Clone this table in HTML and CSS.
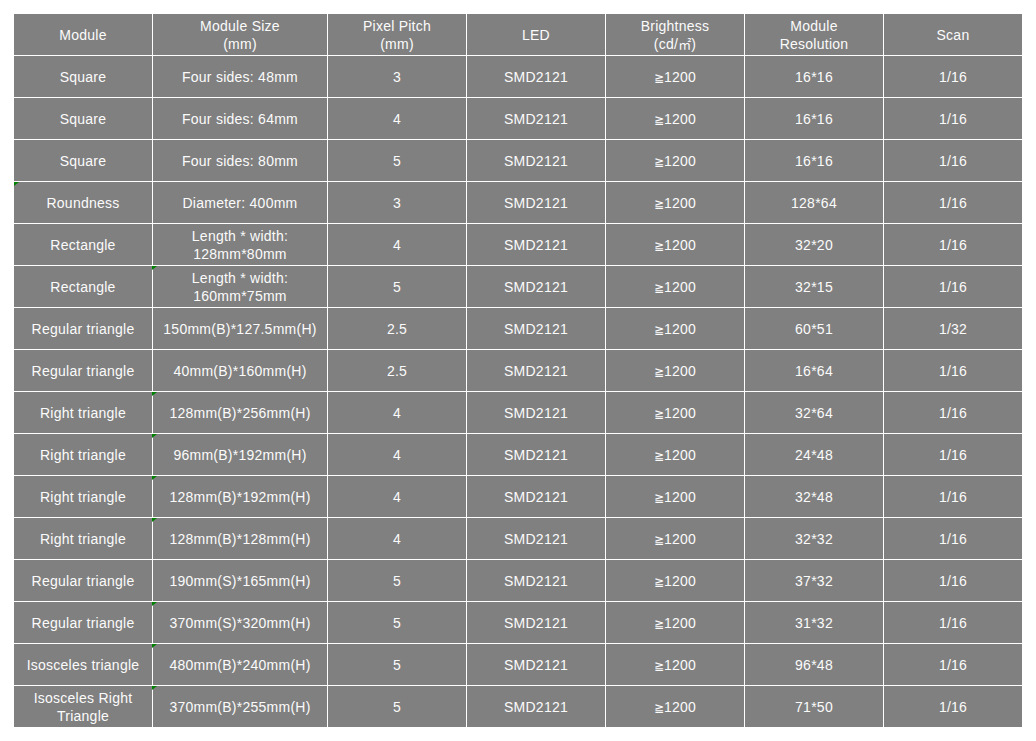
FILE: index.html
```html
<!DOCTYPE html>
<html>
<head>
<meta charset="utf-8">
<title>Module specifications</title>
<link rel="stylesheet" href="styles.css">
</head>
<body>
<table class="spec">
  <colgroup>
    <col class="c-narrow"><col class="c-wide"><col class="c-narrow"><col class="c-narrow"><col class="c-narrow"><col class="c-narrow"><col class="c-narrow">
  </colgroup>
  <thead>
    <tr><th>Module</th><th>Module Size<br>(mm)</th><th>Pixel Pitch<br>(mm)</th><th>LED</th><th>Brightness<br>(cd/<span class="sq">㎡</span>)</th><th>Module<br>Resolution</th><th>Scan</th></tr>
  </thead>
  <tbody>
    <tr><td>Square</td><td>Four sides: 48mm</td><td>3</td><td>SMD2121</td><td><span class="ge">≧</span>1200</td><td>16*16</td><td>1/16</td></tr>
    <tr><td>Square</td><td>Four sides: 64mm</td><td>4</td><td>SMD2121</td><td><span class="ge">≧</span>1200</td><td>16*16</td><td>1/16</td></tr>
    <tr><td>Square</td><td>Four sides: 80mm</td><td>5</td><td>SMD2121</td><td><span class="ge">≧</span>1200</td><td>16*16</td><td>1/16</td></tr>
    <tr><td class="flag flag-first">Roundness</td><td>Diameter: 400mm</td><td>3</td><td>SMD2121</td><td><span class="ge">≧</span>1200</td><td>128*64</td><td>1/16</td></tr>
    <tr><td>Rectangle</td><td>Length * width:<br>128mm*80mm</td><td>4</td><td>SMD2121</td><td><span class="ge">≧</span>1200</td><td>32*20</td><td>1/16</td></tr>
    <tr><td>Rectangle</td><td class="flag">Length * width:<br>160mm*75mm</td><td>5</td><td>SMD2121</td><td><span class="ge">≧</span>1200</td><td>32*15</td><td>1/16</td></tr>
    <tr><td>Regular triangle</td><td>150mm(B)*127.5mm(H)</td><td>2.5</td><td>SMD2121</td><td><span class="ge">≧</span>1200</td><td>60*51</td><td>1/32</td></tr>
    <tr><td>Regular triangle</td><td>40mm(B)*160mm(H)</td><td>2.5</td><td>SMD2121</td><td><span class="ge">≧</span>1200</td><td>16*64</td><td>1/16</td></tr>
    <tr><td>Right triangle</td><td class="flag">128mm(B)*256mm(H)</td><td>4</td><td>SMD2121</td><td><span class="ge">≧</span>1200</td><td>32*64</td><td>1/16</td></tr>
    <tr><td>Right triangle</td><td class="flag">96mm(B)*192mm(H)</td><td>4</td><td>SMD2121</td><td><span class="ge">≧</span>1200</td><td>24*48</td><td>1/16</td></tr>
    <tr><td>Right triangle</td><td class="flag">128mm(B)*192mm(H)</td><td>4</td><td>SMD2121</td><td><span class="ge">≧</span>1200</td><td>32*48</td><td>1/16</td></tr>
    <tr><td>Right triangle</td><td class="flag">128mm(B)*128mm(H)</td><td>4</td><td>SMD2121</td><td><span class="ge">≧</span>1200</td><td>32*32</td><td>1/16</td></tr>
    <tr><td>Regular triangle</td><td>190mm(S)*165mm(H)</td><td>5</td><td>SMD2121</td><td><span class="ge">≧</span>1200</td><td>37*32</td><td>1/16</td></tr>
    <tr><td>Regular triangle</td><td class="flag">370mm(S)*320mm(H)</td><td>5</td><td>SMD2121</td><td><span class="ge">≧</span>1200</td><td>31*32</td><td>1/16</td></tr>
    <tr><td>Isosceles triangle</td><td class="flag">480mm(B)*240mm(H)</td><td>5</td><td>SMD2121</td><td><span class="ge">≧</span>1200</td><td>96*48</td><td>1/16</td></tr>
    <tr><td>Isosceles Right<br>Triangle</td><td class="flag">370mm(B)*255mm(H)</td><td>5</td><td>SMD2121</td><td><span class="ge">≧</span>1200</td><td>71*50</td><td>1/16</td></tr>
  </tbody>
</table>
</body>
</html>
```
FILE: styles.css
```css
html, body {
  margin: 0;
  padding: 0;
  background: #ffffff;
}

.spec {
  margin: 13px 0 0 13px;
  table-layout: fixed;
  width: 1010px;
  border-collapse: separate;
  border-spacing: 1px;
  font-family: "Liberation Sans", Arial, "Noto Sans CJK SC", sans-serif;
  font-size: 14px;
  letter-spacing: 0.25px;
  color: #fbfbfb;
}

.c-narrow { width: 138px; }
.c-wide { width: 174px; }

.spec th,
.spec td {
  background: #808080;
  height: 41px;
  padding: 0 1px;
  box-sizing: border-box;
  text-align: center;
  vertical-align: middle;
  line-height: 18px;
  font-weight: normal;
  position: relative;
}

.sq {
  font-family: "Noto Sans CJK SC", sans-serif;
  font-size: 13px;
  line-height: 0;
  letter-spacing: 0;
}

.ge {
  font-family: "DejaVu Sans", sans-serif;
  font-size: 12px;
  line-height: 0;
  letter-spacing: 0;
}

.flag::before {
  content: "";
  position: absolute;
  top: 0;
  left: -1px;
  width: 0;
  height: 0;
  border-top: 4px solid #008000;
  border-right: 5px solid transparent;
}

.flag-first::before {
  left: 0;
}
```
